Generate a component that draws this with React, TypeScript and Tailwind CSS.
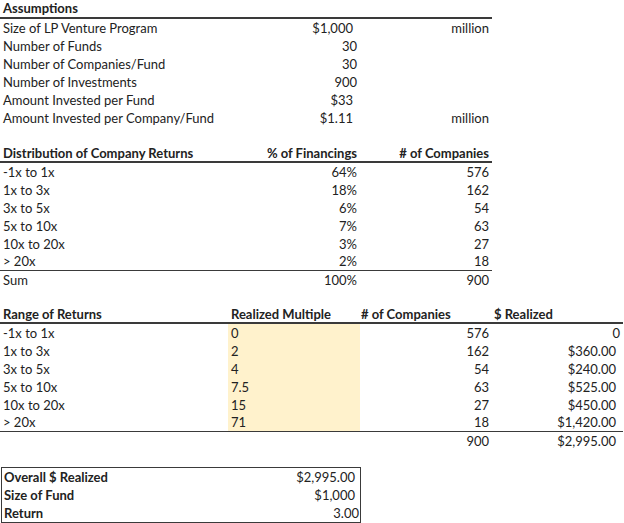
import React from "react";

const font = { fontFamily: "Lato, 'Open Sans', sans-serif" };

type Cell = { t?: string; cls?: string };

function Row({ cells, h = "h-[18px]" }: { cells: Cell[]; h?: string }) {
  return (
    <div className={`grid grid-cols-[228px_132px_132px_131px] items-center ${h}`}>
      {cells.map((c, i) => (
        <div key={i} className={`h-full flex items-center whitespace-nowrap ${c.cls ?? ""}`}>
          {c.t ?? ""}
        </div>
      ))}
    </div>
  );
}

const L = "pl-[3px]";
const Rn = "justify-end pr-[3px]";
const Rd = "justify-end pr-[7px]";

export default function App() {
  const assumptions: [string, string, string, string][] = [
    ["Size of LP Venture Program", "$1,000", Rd, "million"],
    ["Number of Funds", "30", Rn, ""],
    ["Number of Companies/Fund", "30", Rn, ""],
    ["Number of Investments", "900", Rn, ""],
    ["Amount Invested per Fund", "$33", Rd, ""],
    ["Amount Invested per Company/Fund", "$1.11", Rd, "million"],
  ];
  const dist: [string, string, string][] = [
    ["-1x to 1x", "64%", "576"],
    ["1x to 3x", "18%", "162"],
    ["3x to 5x", "6%", "54"],
    ["5x to 10x", "7%", "63"],
    ["10x to 20x", "3%", "27"],
    ["> 20x", "2%", "18"],
  ];
  const range: [string, string, string, string][] = [
    ["-1x to 1x", "0", "576", "0"],
    ["1x to 3x", "2", "162", "$360.00"],
    ["3x to 5x", "4", "54", "$240.00"],
    ["5x to 10x", "7.5", "63", "$525.00"],
    ["10x to 20x", "15", "27", "$450.00"],
    ["> 20x", "71", "18", "$1,420.00"],
  ];

  return (
    <div className="w-[624px] h-[523px] bg-white text-[#222222] text-[13px] leading-none overflow-hidden" style={font}>
      {/* Assumptions */}
      <div>
        <div className="w-[492px] h-[19px] border-b-2 border-[#3a3a3a] flex items-center font-bold pl-[3px]">
          Assumptions
        </div>
        {assumptions.map((r, i) => (
          <Row
            key={i}
            cells={[
              { t: r[0], cls: L },
              { t: r[1], cls: r[2] },
              { t: r[3], cls: Rn },
              {},
            ]}
          />
        ))}
      </div>

      <div className="h-[18px]" />

      {/* Distribution */}
      <div>
        <div className="w-[492px] border-b-2 border-[#3a3a3a] pt-[1px]">
          <Row
            h="h-[15px]"
            cells={[
              { t: "Distribution of Company Returns", cls: `${L} font-bold` },
              { t: "% of Financings", cls: `${Rn} font-bold` },
              { t: "# of Companies", cls: `${Rn} font-bold` },
            ]}
          />
        </div>
        <div className="w-[492px] border-b border-[#3a3a3a]">
          {dist.map((r, i) => (
            <Row
              key={i}
              h={i === dist.length - 1 ? "h-[17px]" : "h-[18px]"}
              cells={[
                { t: r[0], cls: L },
                { t: r[1], cls: Rn },
                { t: r[2], cls: Rn },
              ]}
            />
          ))}
        </div>
        <Row
          cells={[
            { t: "Sum", cls: L },
            { t: "100%", cls: Rn },
            { t: "900", cls: Rn },
          ]}
        />
      </div>

      <div className="h-[17px]" />

      {/* Range of Returns */}
      <div>
        <div className="w-[623px] border-b-2 border-[#3a3a3a] pt-[1px]">
          <Row
            h="h-[15px]"
            cells={[
              { t: "Range of Returns", cls: `${L} font-bold` },
              { t: "Realized Multiple", cls: `${L} font-bold` },
              { t: "# of Companies", cls: "pl-[1px] font-bold" },
              { t: "$ Realized", cls: "pl-[2px] font-bold" },
            ]}
          />
        </div>
        <div className="w-[623px] border-b border-[#3a3a3a]">
          {range.map((r, i) => (
            <Row
              key={i}
              h={i === range.length - 1 ? "h-[17px]" : "h-[18px]"}
              cells={[
                { t: r[0], cls: L },
                { t: r[1], cls: `${L} bg-[#fff2cc]` },
                { t: r[2], cls: Rn },
                { t: r[3], cls: r[3] === "0" ? Rn : Rd },
              ]}
            />
          ))}
        </div>
        <Row
          cells={[
            {},
            {},
            { t: "900", cls: Rn },
            { t: "$2,995.00", cls: Rd },
          ]}
        />
      </div>

      <div className="h-[17px]" />

      {/* Summary box */}
      <div className="ml-[1px] w-[360px] border border-[#3a3a3a]">
        {[
          ["Overall $ Realized", "$2,995.00"],
          ["Size of Fund", "$1,000"],
          ["Return", "3.00"],
        ].map((r, i) => (
          <div key={i} className="h-[18px] flex items-center justify-between">
            <span className="pl-[2px] font-bold">{r[0]}</span>
            <span className={r[1] === "3.00" ? "pr-[1px]" : "pr-[5px]"}>{r[1]}</span>
          </div>
        ))}
      </div>
    </div>
  );
}
